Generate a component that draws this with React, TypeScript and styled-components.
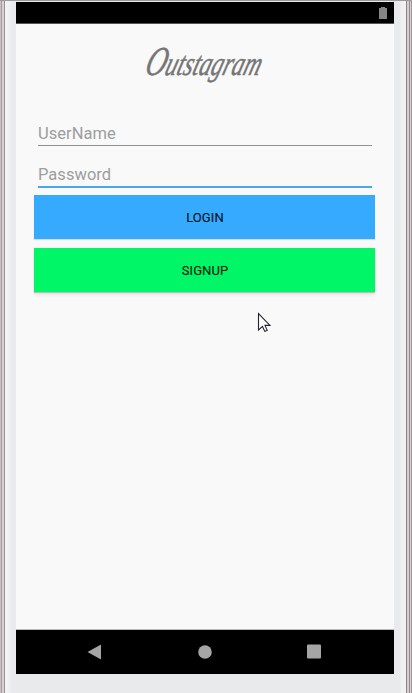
import React from "react";
import styled, { createGlobalStyle } from "styled-components";

const GlobalStyle = createGlobalStyle`
  *, *::before, *::after { box-sizing: border-box; }
  body { margin: 0; overflow: hidden; font-family: Roboto, "Noto Sans", sans-serif; }
`;

const Device = styled.div`
  position: relative;
  width: 412px;
  height: 693px;
  padding: 2px 18px 19px 16px;
  background:
    linear-gradient(#9b9b9d, #9b9b9d) 0 0 / 100% 1px no-repeat,
    linear-gradient(90deg,
      #c9c2c4 0 1px, #a39da0 1px 2px, #d8d0d2 2px 4px, #979294 4px 5px,
      #f4f4f4 5px, #eff0f1 9px, #e8eaec 12px, #e9eaec 400px,
      #f1f1f2 402px, #f1f1f1 406px, #8a8587 406px 407px,
      #d5cdcf 407px 409px, #918c8e 409px 410px, #d8d0d2 410px 411px, #9a9496 411px 412px);
`;

const Screen = styled.main`
  display: flex;
  flex-direction: column;
  height: 672px;
  background: #f9f9f9;
`;

const StatusBar = styled.header`
  display: flex;
  justify-content: flex-end;
  height: 22px;
  padding: 5px 7px 0 0;
  background: #000;
  border-bottom: 1px solid #555;
`;

const Content = styled.section`
  flex: 1;
  display: flex;
  flex-direction: column;
  padding: 0 19px 0 18px;
`;

const Wordmark = styled.h1`
  height: 91px;
  margin: 0;
  padding-top: 14px;
  text-align: center;
  color: #757575;
  font: italic 400 34px/46px "Liberation Serif", serif;
  -webkit-text-stroke: 0.5px #757575;
  white-space: nowrap;

  span {
    display: inline-block;
    transform: skewX(-17deg) scaleX(0.69);
  }

  span::first-letter { font-size: 41px; }
`;

const Field = styled.input<{ $active?: boolean }>`
  display: block;
  width: 334px;
  height: ${(p) => (p.$active ? 42 : 31)}px;
  margin: 0 0 0 4px;
  padding: ${(p) => (p.$active ? "17px 0 0" : "7px 0 0")};
  border: 0;
  border-bottom: ${(p) => (p.$active ? "2px solid #49a7ec" : "1px solid #929292")};
  border-radius: 0;
  outline: 0;
  background: transparent;
  font: 400 16.5px Roboto, sans-serif;
  letter-spacing: 0.03px;

  &::placeholder { color: #9d9d9d; opacity: 1; }
`;

const Action = styled.button<{ $color: string; $top: number }>`
  flex: none;
  height: 44px;
  margin: ${(p) => p.$top}px 0 0;
  padding: 1px 0 0 1px;
  border: 0;
  background: ${(p) => p.$color};
  box-shadow: 0 1px 1px rgba(0, 0, 0, 0.12);
  color: rgba(0, 0, 0, 0.88);
  font: 400 13px Roboto, sans-serif;
  letter-spacing: 0.1px;
  -webkit-text-stroke: 0.2px currentColor;

  &:last-child { box-shadow: 0 1px 1px rgba(0, 0, 0, 0.2), 0 4px 3px rgba(0, 0, 0, 0.06); }
`;

const NavBar = styled.nav`
  display: flex;
  align-items: center;
  justify-content: space-between;
  height: 45px;
  padding: 0 73px 1px 71px;
  background: #000;
  border-top: 1px solid #b5bdb7;
`;

const Pointer = styled.svg`
  position: absolute;
  left: 257px;
  top: 312px;
`;

export default function App() {
  return (
    <>
      <GlobalStyle />
      <Device>
        <Screen>
          <StatusBar>
            <svg width="8" height="12" viewBox="0 0 8 12" fill="#858585">
              <path d="M2 0h4v1h2v11H0V1h2z" />
            </svg>
          </StatusBar>
          <Content>
            <Wordmark>
              <span>Outstagram</span>
            </Wordmark>
            <Field placeholder="UserName" />
            <Field placeholder="Password" type="password" $active />
            <Action $color="#35aaff" $top={7}>LOGIN</Action>
            <Action $color="#00f667" $top={9}>SIGNUP</Action>
          </Content>
          <NavBar>
            <svg width="15" height="16" viewBox="0 0 15 16" fill="#a5a5a5">
              <path d="M.5 8 14 .5v15z" />
            </svg>
            <svg width="14" height="14" viewBox="0 0 14 14" fill="#a5a5a5">
              <circle cx="7" cy="7" r="6.8" />
            </svg>
            <svg width="14" height="15" viewBox="0 0 14 15" fill="#a5a5a5">
              <rect y=".4" width="14" height="14.2" rx="1" />
            </svg>
          </NavBar>
        </Screen>
        <Pointer width="14" height="21" viewBox="0 0 14 21">
          <path
            d="M1.5 1.5V18l4-3.6 2.3 5 2.4-1-2.2-5h5z"
            fill="#fff"
            stroke="#22222c"
            strokeWidth="1.1"
          />
        </Pointer>
      </Device>
    </>
  );
}
